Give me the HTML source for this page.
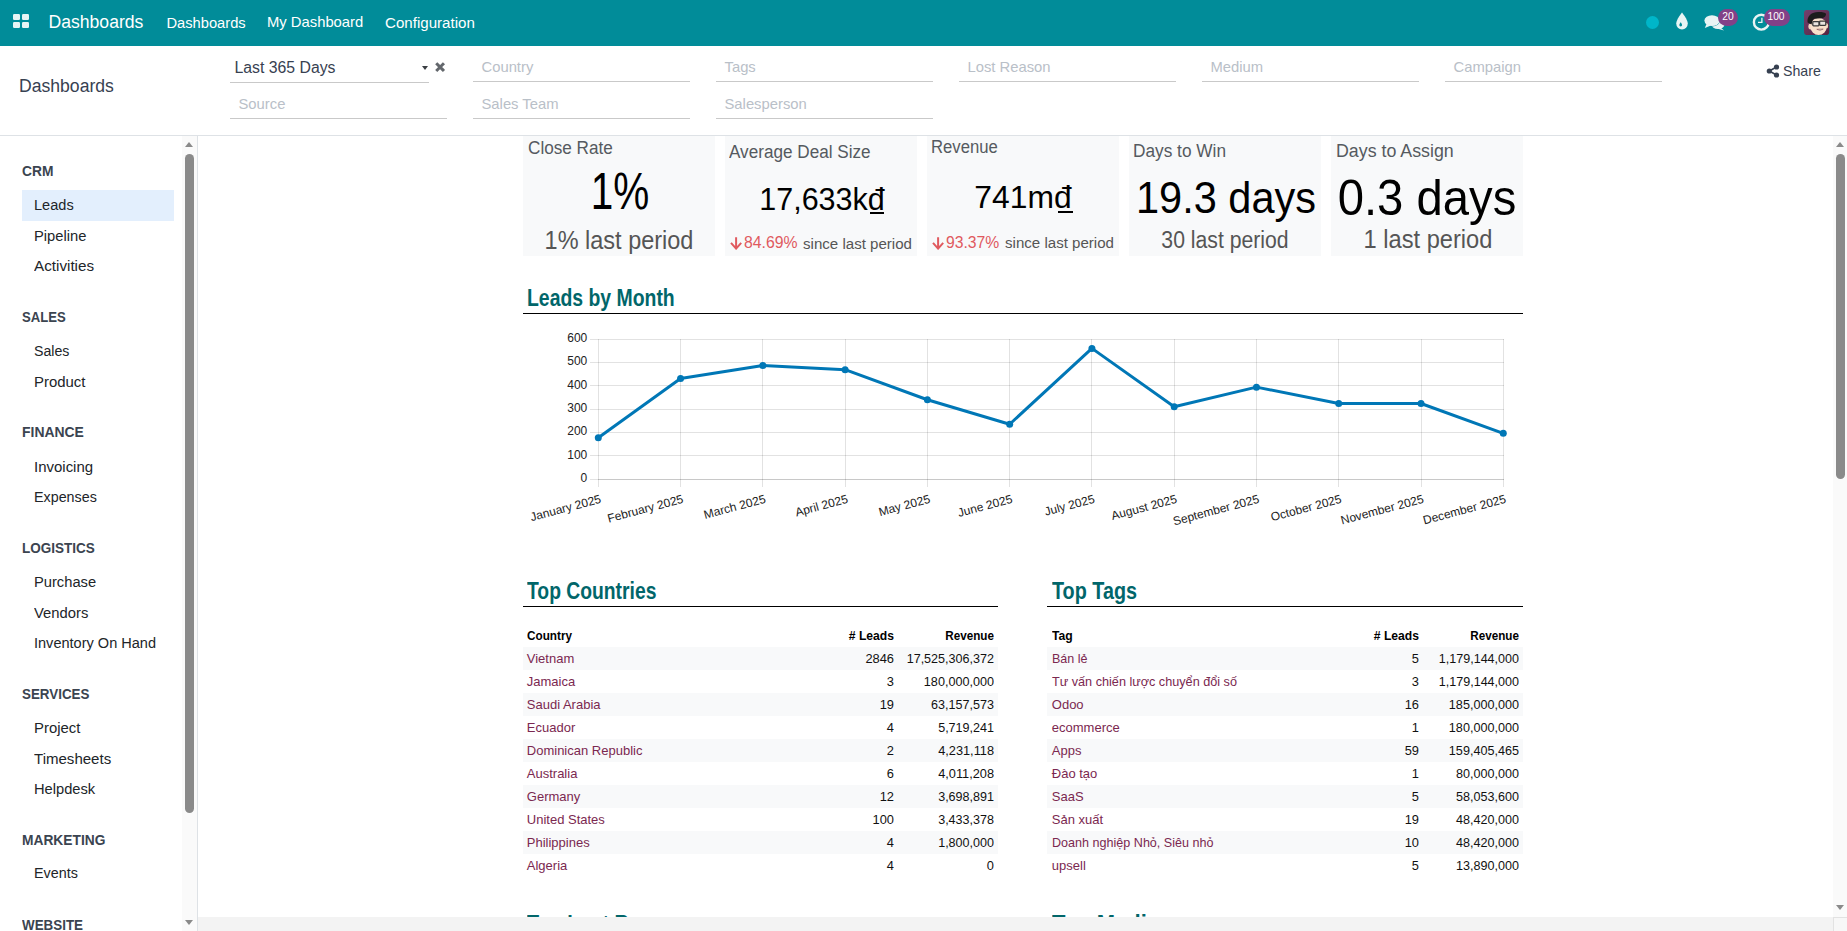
<!DOCTYPE html><html><head><meta charset="utf-8"><style>
html,body{margin:0;padding:0;}
body{width:1847px;height:931px;overflow:hidden;position:relative;background:#fff;font-family:"Liberation Sans",sans-serif;}
.t{position:absolute;white-space:nowrap;line-height:1;}
.b{position:absolute;}
</style></head><body>
<div class="b" style="left:523px;top:136px;width:192px;height:120px;background:#f8f9fa;"></div>
<div class="b" style="left:725px;top:136px;width:192px;height:120px;background:#f8f9fa;"></div>
<div class="b" style="left:927px;top:136px;width:192px;height:120px;background:#f8f9fa;"></div>
<div class="b" style="left:1129px;top:136px;width:192px;height:120px;background:#f8f9fa;"></div>
<div class="b" style="left:1331px;top:136px;width:192px;height:120px;background:#f8f9fa;"></div>
<div class="t" style="left:527.60px;top:140.00px;font-size:17.6px;font-weight:400;color:#555a60;transform:scaleX(0.9742);transform-origin:left top;">Close Rate</div>
<div class="t" style="left:119.90px;width:1000px;text-align:center;top:166.13px;font-size:51px;font-weight:400;color:#000;transform:scaleX(0.7936);transform-origin:center top;">1%</div>
<div class="t" style="left:119.40px;width:1000px;text-align:center;top:227.51px;font-size:25.5px;font-weight:400;color:#555555;transform:scaleX(0.9208);transform-origin:center top;">1% last period</div>
<div class="t" style="left:729.00px;top:144.20px;font-size:17.6px;font-weight:400;color:#555a60;transform:scaleX(0.9738);transform-origin:left top;">Average Deal Size</div>
<div class="t" style="left:322.00px;width:1000px;text-align:center;top:183.98px;font-size:30.5px;font-weight:400;color:#000;transform:scaleX(1.0000);transform-origin:center top;">17,633k&#273;</div>
<div class="b" style="left:870.3px;top:212px;width:14px;height:2px;background:#000;"></div>
<svg class="b" style="left:729.7px;top:237.3px" width="13" height="13" viewBox="0 0 13 13"><path d="M6.1 0.3 V11.2 M1 5.9 L6.1 11.6 L11.2 5.9" fill="none" stroke="#e05a5f" stroke-width="2"/></svg>
<div class="t" style="left:744.00px;top:235.26px;font-size:16px;font-weight:400;color:#e05a5f;transform:scaleX(0.9859);transform-origin:left top;">84.69%</div>
<div class="t" style="left:802.60px;top:235.85px;font-size:15.3px;font-weight:400;color:#555555;transform:scaleX(0.9860);transform-origin:left top;">since last period</div>
<div class="t" style="left:931.40px;top:138.80px;font-size:17.6px;font-weight:400;color:#555a60;transform:scaleX(0.9484);transform-origin:left top;">Revenue</div>
<div class="t" style="left:523.30px;width:1000px;text-align:center;top:181.41px;font-size:32px;font-weight:400;color:#000;transform:scaleX(0.9944);transform-origin:center top;">741m&#273;</div>
<div class="b" style="left:1058.4px;top:211px;width:14.5px;height:2px;background:#000;"></div>
<svg class="b" style="left:931.7px;top:236.8px" width="13" height="13" viewBox="0 0 13 13"><path d="M6.1 0.3 V11.2 M1 5.9 L6.1 11.6 L11.2 5.9" fill="none" stroke="#e05a5f" stroke-width="2"/></svg>
<div class="t" style="left:945.50px;top:234.66px;font-size:16px;font-weight:400;color:#e05a5f;transform:scaleX(0.9822);transform-origin:left top;">93.37%</div>
<div class="t" style="left:1004.50px;top:235.25px;font-size:15.3px;font-weight:400;color:#555555;transform:scaleX(0.9860);transform-origin:left top;">since last period</div>
<div class="t" style="left:1133.30px;top:142.60px;font-size:17.6px;font-weight:400;color:#555a60;transform:scaleX(0.9806);transform-origin:left top;">Days to Win</div>
<div class="t" style="left:725.60px;width:1000px;text-align:center;top:176.35px;font-size:44px;font-weight:400;color:#000;transform:scaleX(0.9433);transform-origin:center top;">19.3 days</div>
<div class="t" style="left:724.80px;width:1000px;text-align:center;top:228.61px;font-size:23.5px;font-weight:400;color:#555555;transform:scaleX(0.9022);transform-origin:center top;">30 last period</div>
<div class="t" style="left:1335.50px;top:142.60px;font-size:17.6px;font-weight:400;color:#555a60;transform:scaleX(1.0114);transform-origin:left top;">Days to Assign</div>
<div class="t" style="left:927.00px;width:1000px;text-align:center;top:174.31px;font-size:49.6px;font-weight:400;color:#000;transform:scaleX(0.9521);transform-origin:center top;">0.3 days</div>
<div class="t" style="left:927.70px;width:1000px;text-align:center;top:226.07px;font-size:26.5px;font-weight:400;color:#555555;transform:scaleX(0.8921);transform-origin:center top;">1 last period</div>
<div class="t" style="left:527.40px;top:286.15px;font-size:23.8px;font-weight:700;color:#01666a;transform:scaleX(0.8154);transform-origin:left top;">Leads by Month</div>
<div class="b" style="left:523px;top:313px;width:1000px;height:1px;background:#000;"></div>
<div class="t" style="left:526.80px;top:579.25px;font-size:23.8px;font-weight:700;color:#01666a;transform:scaleX(0.8112);transform-origin:left top;">Top Countries</div>
<div class="b" style="left:523px;top:606px;width:474.5px;height:1px;background:#000;"></div>
<div class="t" style="left:1052.10px;top:579.25px;font-size:23.8px;font-weight:700;color:#01666a;transform:scaleX(0.8314);transform-origin:left top;">Top Tags</div>
<div class="b" style="left:1047px;top:606px;width:476px;height:1px;background:#000;"></div>
<div class="t" style="left:526.80px;top:911.85px;font-size:23.8px;font-weight:700;color:#01666a;transform:scaleX(0.8313);transform-origin:left top;">Top Lost Reasons</div>
<div class="t" style="left:1052.10px;top:911.85px;font-size:23.8px;font-weight:700;color:#01666a;transform:scaleX(0.9235);transform-origin:left top;">Top Mediums</div>
<svg class="b" style="left:0;top:0" width="1847" height="931" viewBox="0 0 1847 931"><line x1="590" y1="479.5" x2="1504" y2="479.5" stroke="rgba(0,0,0,0.115)" stroke-width="1"/><line x1="590" y1="455.5" x2="1504" y2="455.5" stroke="rgba(0,0,0,0.115)" stroke-width="1"/><line x1="590" y1="432.5" x2="1504" y2="432.5" stroke="rgba(0,0,0,0.115)" stroke-width="1"/><line x1="590" y1="409.5" x2="1504" y2="409.5" stroke="rgba(0,0,0,0.115)" stroke-width="1"/><line x1="590" y1="385.5" x2="1504" y2="385.5" stroke="rgba(0,0,0,0.115)" stroke-width="1"/><line x1="590" y1="362.5" x2="1504" y2="362.5" stroke="rgba(0,0,0,0.115)" stroke-width="1"/><line x1="590" y1="339.5" x2="1504" y2="339.5" stroke="rgba(0,0,0,0.115)" stroke-width="1"/><line x1="598" y1="479.5" x2="1504" y2="479.5" stroke="rgba(0,0,0,0.115)" stroke-width="1"/><line x1="598.5" y1="339" x2="598.5" y2="487" stroke="rgba(0,0,0,0.115)" stroke-width="1"/><line x1="680.5" y1="339" x2="680.5" y2="487" stroke="rgba(0,0,0,0.115)" stroke-width="1"/><line x1="762.5" y1="339" x2="762.5" y2="487" stroke="rgba(0,0,0,0.115)" stroke-width="1"/><line x1="845.5" y1="339" x2="845.5" y2="487" stroke="rgba(0,0,0,0.115)" stroke-width="1"/><line x1="927.5" y1="339" x2="927.5" y2="487" stroke="rgba(0,0,0,0.115)" stroke-width="1"/><line x1="1009.5" y1="339" x2="1009.5" y2="487" stroke="rgba(0,0,0,0.115)" stroke-width="1"/><line x1="1091.5" y1="339" x2="1091.5" y2="487" stroke="rgba(0,0,0,0.115)" stroke-width="1"/><line x1="1174.5" y1="339" x2="1174.5" y2="487" stroke="rgba(0,0,0,0.115)" stroke-width="1"/><line x1="1256.5" y1="339" x2="1256.5" y2="487" stroke="rgba(0,0,0,0.115)" stroke-width="1"/><line x1="1338.5" y1="339" x2="1338.5" y2="487" stroke="rgba(0,0,0,0.115)" stroke-width="1"/><line x1="1421.5" y1="339" x2="1421.5" y2="487" stroke="rgba(0,0,0,0.115)" stroke-width="1"/><line x1="1503.5" y1="339" x2="1503.5" y2="487" stroke="rgba(0,0,0,0.115)" stroke-width="1"/><polyline fill="none" stroke="#0077b6" stroke-width="3" stroke-linejoin="round" points="598.30,437.77 680.57,378.50 762.84,365.43 845.11,369.63 927.38,399.73 1009.65,424.23 1091.92,348.40 1174.19,406.73 1256.46,387.13 1338.73,403.47 1421.00,403.47 1503.27,433.33"/><circle cx="598.30" cy="437.77" r="3.5" fill="#0077b6"/><circle cx="680.57" cy="378.50" r="3.5" fill="#0077b6"/><circle cx="762.84" cy="365.43" r="3.5" fill="#0077b6"/><circle cx="845.11" cy="369.63" r="3.5" fill="#0077b6"/><circle cx="927.38" cy="399.73" r="3.5" fill="#0077b6"/><circle cx="1009.65" cy="424.23" r="3.5" fill="#0077b6"/><circle cx="1091.92" cy="348.40" r="3.5" fill="#0077b6"/><circle cx="1174.19" cy="406.73" r="3.5" fill="#0077b6"/><circle cx="1256.46" cy="387.13" r="3.5" fill="#0077b6"/><circle cx="1338.73" cy="403.47" r="3.5" fill="#0077b6"/><circle cx="1421.00" cy="403.47" r="3.5" fill="#0077b6"/><circle cx="1503.27" cy="433.33" r="3.5" fill="#0077b6"/><text x="587.3" y="482.10" text-anchor="end" font-family="Liberation Sans" font-size="12" fill="#222">0</text><text x="587.3" y="458.77" text-anchor="end" font-family="Liberation Sans" font-size="12" fill="#222">100</text><text x="587.3" y="435.43" text-anchor="end" font-family="Liberation Sans" font-size="12" fill="#222">200</text><text x="587.3" y="412.10" text-anchor="end" font-family="Liberation Sans" font-size="12" fill="#222">300</text><text x="587.3" y="388.77" text-anchor="end" font-family="Liberation Sans" font-size="12" fill="#222">400</text><text x="587.3" y="365.43" text-anchor="end" font-family="Liberation Sans" font-size="12" fill="#222">500</text><text x="587.3" y="342.10" text-anchor="end" font-family="Liberation Sans" font-size="12" fill="#222">600</text><text x="601.80" y="502.5" text-anchor="end" font-family="Liberation Sans" font-size="12" fill="#222" transform="rotate(-15 601.80 502.5)">January 2025</text><text x="684.07" y="502.5" text-anchor="end" font-family="Liberation Sans" font-size="12" fill="#222" transform="rotate(-15 684.07 502.5)">February 2025</text><text x="766.34" y="502.5" text-anchor="end" font-family="Liberation Sans" font-size="12" fill="#222" transform="rotate(-15 766.34 502.5)">March 2025</text><text x="848.61" y="502.5" text-anchor="end" font-family="Liberation Sans" font-size="12" fill="#222" transform="rotate(-15 848.61 502.5)">April 2025</text><text x="930.88" y="502.5" text-anchor="end" font-family="Liberation Sans" font-size="12" fill="#222" transform="rotate(-15 930.88 502.5)">May 2025</text><text x="1013.15" y="502.5" text-anchor="end" font-family="Liberation Sans" font-size="12" fill="#222" transform="rotate(-15 1013.15 502.5)">June 2025</text><text x="1095.42" y="502.5" text-anchor="end" font-family="Liberation Sans" font-size="12" fill="#222" transform="rotate(-15 1095.42 502.5)">July 2025</text><text x="1177.69" y="502.5" text-anchor="end" font-family="Liberation Sans" font-size="12" fill="#222" transform="rotate(-15 1177.69 502.5)">August 2025</text><text x="1259.96" y="502.5" text-anchor="end" font-family="Liberation Sans" font-size="12" fill="#222" transform="rotate(-15 1259.96 502.5)">September 2025</text><text x="1342.23" y="502.5" text-anchor="end" font-family="Liberation Sans" font-size="12" fill="#222" transform="rotate(-15 1342.23 502.5)">October 2025</text><text x="1424.50" y="502.5" text-anchor="end" font-family="Liberation Sans" font-size="12" fill="#222" transform="rotate(-15 1424.50 502.5)">November 2025</text><text x="1506.77" y="502.5" text-anchor="end" font-family="Liberation Sans" font-size="12" fill="#222" transform="rotate(-15 1506.77 502.5)">December 2025</text></svg>
<div class="t" style="left:526.80px;top:628.80px;font-size:13px;font-weight:700;color:#000;transform:scaleX(0.9028);transform-origin:left top;">Country</div>
<div class="t" style="left:-106.50px;width:1000px;text-align:right;top:628.80px;font-size:13px;font-weight:700;color:#000;transform:scaleX(0.9335);transform-origin:right top;"># Leads</div>
<div class="t" style="left:-6.00px;width:1000px;text-align:right;top:628.80px;font-size:13px;font-weight:700;color:#000;transform:scaleX(0.8985);transform-origin:right top;">Revenue</div>
<div class="b" style="left:523px;top:646.6px;width:474.5px;height:23px;background:#f8f9fa;"></div>
<div class="t" style="left:526.80px;top:652.00px;font-size:13px;font-weight:400;color:#7b2850;">Vietnam</div>
<div class="t" style="left:-106.50px;width:1000px;text-align:right;top:652.00px;font-size:13px;font-weight:400;color:#111;transform:scaleX(0.9889);transform-origin:right top;">2846</div>
<div class="t" style="left:-6.00px;width:1000px;text-align:right;top:652.00px;font-size:13px;font-weight:400;color:#111;transform:scaleX(0.9665);transform-origin:right top;">17,525,306,372</div>
<div class="t" style="left:526.80px;top:675.00px;font-size:13px;font-weight:400;color:#7b2850;">Jamaica</div>
<div class="t" style="left:-106.50px;width:1000px;text-align:right;top:675.00px;font-size:13px;font-weight:400;color:#111;transform:scaleX(0.9883);transform-origin:right top;">3</div>
<div class="t" style="left:-6.00px;width:1000px;text-align:right;top:675.00px;font-size:13px;font-weight:400;color:#111;transform:scaleX(0.9703);transform-origin:right top;">180,000,000</div>
<div class="b" style="left:523px;top:692.6px;width:474.5px;height:23px;background:#f8f9fa;"></div>
<div class="t" style="left:526.80px;top:698.00px;font-size:13px;font-weight:400;color:#7b2850;">Saudi Arabia</div>
<div class="t" style="left:-106.50px;width:1000px;text-align:right;top:698.00px;font-size:13px;font-weight:400;color:#111;transform:scaleX(0.9883);transform-origin:right top;">19</div>
<div class="t" style="left:-6.00px;width:1000px;text-align:right;top:698.00px;font-size:13px;font-weight:400;color:#111;transform:scaleX(0.9681);transform-origin:right top;">63,157,573</div>
<div class="t" style="left:526.80px;top:721.00px;font-size:13px;font-weight:400;color:#7b2850;">Ecuador</div>
<div class="t" style="left:-106.50px;width:1000px;text-align:right;top:721.00px;font-size:13px;font-weight:400;color:#111;transform:scaleX(0.9883);transform-origin:right top;">4</div>
<div class="t" style="left:-6.00px;width:1000px;text-align:right;top:721.00px;font-size:13px;font-weight:400;color:#111;transform:scaleX(0.9655);transform-origin:right top;">5,719,241</div>
<div class="b" style="left:523px;top:738.6px;width:474.5px;height:23px;background:#f8f9fa;"></div>
<div class="t" style="left:526.80px;top:744.00px;font-size:13px;font-weight:400;color:#7b2850;">Dominican Republic</div>
<div class="t" style="left:-106.50px;width:1000px;text-align:right;top:744.00px;font-size:13px;font-weight:400;color:#111;transform:scaleX(0.9883);transform-origin:right top;">2</div>
<div class="t" style="left:-6.00px;width:1000px;text-align:right;top:744.00px;font-size:13px;font-weight:400;color:#111;transform:scaleX(0.9820);transform-origin:right top;">4,231,118</div>
<div class="t" style="left:526.80px;top:767.00px;font-size:13px;font-weight:400;color:#7b2850;">Australia</div>
<div class="t" style="left:-106.50px;width:1000px;text-align:right;top:767.00px;font-size:13px;font-weight:400;color:#111;transform:scaleX(0.9883);transform-origin:right top;">6</div>
<div class="t" style="left:-6.00px;width:1000px;text-align:right;top:767.00px;font-size:13px;font-weight:400;color:#111;transform:scaleX(0.9820);transform-origin:right top;">4,011,208</div>
<div class="b" style="left:523px;top:784.6px;width:474.5px;height:23px;background:#f8f9fa;"></div>
<div class="t" style="left:526.80px;top:790.00px;font-size:13px;font-weight:400;color:#7b2850;">Germany</div>
<div class="t" style="left:-106.50px;width:1000px;text-align:right;top:790.00px;font-size:13px;font-weight:400;color:#111;transform:scaleX(0.9883);transform-origin:right top;">12</div>
<div class="t" style="left:-6.00px;width:1000px;text-align:right;top:790.00px;font-size:13px;font-weight:400;color:#111;transform:scaleX(0.9655);transform-origin:right top;">3,698,891</div>
<div class="t" style="left:526.80px;top:813.00px;font-size:13px;font-weight:400;color:#7b2850;">United States</div>
<div class="t" style="left:-106.50px;width:1000px;text-align:right;top:813.00px;font-size:13px;font-weight:400;color:#111;transform:scaleX(0.9883);transform-origin:right top;">100</div>
<div class="t" style="left:-6.00px;width:1000px;text-align:right;top:813.00px;font-size:13px;font-weight:400;color:#111;transform:scaleX(0.9655);transform-origin:right top;">3,433,378</div>
<div class="b" style="left:523px;top:830.6px;width:474.5px;height:23px;background:#f8f9fa;"></div>
<div class="t" style="left:526.80px;top:836.00px;font-size:13px;font-weight:400;color:#7b2850;">Philippines</div>
<div class="t" style="left:-106.50px;width:1000px;text-align:right;top:836.00px;font-size:13px;font-weight:400;color:#111;transform:scaleX(0.9883);transform-origin:right top;">4</div>
<div class="t" style="left:-6.00px;width:1000px;text-align:right;top:836.00px;font-size:13px;font-weight:400;color:#111;transform:scaleX(0.9655);transform-origin:right top;">1,800,000</div>
<div class="t" style="left:526.80px;top:859.00px;font-size:13px;font-weight:400;color:#7b2850;">Algeria</div>
<div class="t" style="left:-106.50px;width:1000px;text-align:right;top:859.00px;font-size:13px;font-weight:400;color:#111;transform:scaleX(0.9883);transform-origin:right top;">4</div>
<div class="t" style="left:-6.00px;width:1000px;text-align:right;top:859.00px;font-size:13px;font-weight:400;color:#111;transform:scaleX(0.9883);transform-origin:right top;">0</div>
<div class="t" style="left:1051.80px;top:628.80px;font-size:13px;font-weight:700;color:#000;transform:scaleX(0.9343);transform-origin:left top;">Tag</div>
<div class="t" style="left:418.50px;width:1000px;text-align:right;top:628.80px;font-size:13px;font-weight:700;color:#000;transform:scaleX(0.9335);transform-origin:right top;"># Leads</div>
<div class="t" style="left:519.00px;width:1000px;text-align:right;top:628.80px;font-size:13px;font-weight:700;color:#000;transform:scaleX(0.8985);transform-origin:right top;">Revenue</div>
<div class="b" style="left:1047px;top:646.6px;width:476px;height:23px;background:#f8f9fa;"></div>
<div class="t" style="left:1051.80px;top:652.00px;font-size:13px;font-weight:400;color:#7b2850;transform:scaleX(0.9627);transform-origin:left top;">B&aacute;n l&#7867;</div>
<div class="t" style="left:418.50px;width:1000px;text-align:right;top:652.00px;font-size:13px;font-weight:400;color:#111;transform:scaleX(0.9883);transform-origin:right top;">5</div>
<div class="t" style="left:519.00px;width:1000px;text-align:right;top:652.00px;font-size:13px;font-weight:400;color:#111;transform:scaleX(0.9646);transform-origin:right top;">1,179,144,000</div>
<div class="t" style="left:1051.80px;top:675.00px;font-size:13px;font-weight:400;color:#7b2850;transform:scaleX(0.9738);transform-origin:left top;">T&#432; v&#7845;n chi&#7871;n l&#432;&#7907;c chuy&#7875;n &#273;&#7893;i s&#7889;</div>
<div class="t" style="left:418.50px;width:1000px;text-align:right;top:675.00px;font-size:13px;font-weight:400;color:#111;transform:scaleX(0.9883);transform-origin:right top;">3</div>
<div class="t" style="left:519.00px;width:1000px;text-align:right;top:675.00px;font-size:13px;font-weight:400;color:#111;transform:scaleX(0.9646);transform-origin:right top;">1,179,144,000</div>
<div class="b" style="left:1047px;top:692.6px;width:476px;height:23px;background:#f8f9fa;"></div>
<div class="t" style="left:1051.80px;top:698.00px;font-size:13px;font-weight:400;color:#7b2850;">Odoo</div>
<div class="t" style="left:418.50px;width:1000px;text-align:right;top:698.00px;font-size:13px;font-weight:400;color:#111;transform:scaleX(0.9883);transform-origin:right top;">16</div>
<div class="t" style="left:519.00px;width:1000px;text-align:right;top:698.00px;font-size:13px;font-weight:400;color:#111;transform:scaleX(0.9703);transform-origin:right top;">185,000,000</div>
<div class="t" style="left:1051.80px;top:721.00px;font-size:13px;font-weight:400;color:#7b2850;">ecommerce</div>
<div class="t" style="left:418.50px;width:1000px;text-align:right;top:721.00px;font-size:13px;font-weight:400;color:#111;transform:scaleX(0.9883);transform-origin:right top;">1</div>
<div class="t" style="left:519.00px;width:1000px;text-align:right;top:721.00px;font-size:13px;font-weight:400;color:#111;transform:scaleX(0.9703);transform-origin:right top;">180,000,000</div>
<div class="b" style="left:1047px;top:738.6px;width:476px;height:23px;background:#f8f9fa;"></div>
<div class="t" style="left:1051.80px;top:744.00px;font-size:13px;font-weight:400;color:#7b2850;">Apps</div>
<div class="t" style="left:418.50px;width:1000px;text-align:right;top:744.00px;font-size:13px;font-weight:400;color:#111;transform:scaleX(0.9883);transform-origin:right top;">59</div>
<div class="t" style="left:519.00px;width:1000px;text-align:right;top:744.00px;font-size:13px;font-weight:400;color:#111;transform:scaleX(0.9703);transform-origin:right top;">159,405,465</div>
<div class="t" style="left:1051.80px;top:767.00px;font-size:13px;font-weight:400;color:#7b2850;">&#272;&agrave;o t&#7841;o</div>
<div class="t" style="left:418.50px;width:1000px;text-align:right;top:767.00px;font-size:13px;font-weight:400;color:#111;transform:scaleX(0.9883);transform-origin:right top;">1</div>
<div class="t" style="left:519.00px;width:1000px;text-align:right;top:767.00px;font-size:13px;font-weight:400;color:#111;transform:scaleX(0.9681);transform-origin:right top;">80,000,000</div>
<div class="b" style="left:1047px;top:784.6px;width:476px;height:23px;background:#f8f9fa;"></div>
<div class="t" style="left:1051.80px;top:790.00px;font-size:13px;font-weight:400;color:#7b2850;">SaaS</div>
<div class="t" style="left:418.50px;width:1000px;text-align:right;top:790.00px;font-size:13px;font-weight:400;color:#111;transform:scaleX(0.9883);transform-origin:right top;">5</div>
<div class="t" style="left:519.00px;width:1000px;text-align:right;top:790.00px;font-size:13px;font-weight:400;color:#111;transform:scaleX(0.9681);transform-origin:right top;">58,053,600</div>
<div class="t" style="left:1051.80px;top:813.00px;font-size:13px;font-weight:400;color:#7b2850;">S&#7843;n xu&#7845;t</div>
<div class="t" style="left:418.50px;width:1000px;text-align:right;top:813.00px;font-size:13px;font-weight:400;color:#111;transform:scaleX(0.9883);transform-origin:right top;">19</div>
<div class="t" style="left:519.00px;width:1000px;text-align:right;top:813.00px;font-size:13px;font-weight:400;color:#111;transform:scaleX(0.9681);transform-origin:right top;">48,420,000</div>
<div class="b" style="left:1047px;top:830.6px;width:476px;height:23px;background:#f8f9fa;"></div>
<div class="t" style="left:1051.80px;top:836.00px;font-size:13px;font-weight:400;color:#7b2850;transform:scaleX(0.9672);transform-origin:left top;">Doanh nghi&#7879;p Nh&#7887;, Si&ecirc;u nh&#7887;</div>
<div class="t" style="left:418.50px;width:1000px;text-align:right;top:836.00px;font-size:13px;font-weight:400;color:#111;transform:scaleX(0.9883);transform-origin:right top;">10</div>
<div class="t" style="left:519.00px;width:1000px;text-align:right;top:836.00px;font-size:13px;font-weight:400;color:#111;transform:scaleX(0.9681);transform-origin:right top;">48,420,000</div>
<div class="t" style="left:1051.80px;top:859.00px;font-size:13px;font-weight:400;color:#7b2850;">upsell</div>
<div class="t" style="left:418.50px;width:1000px;text-align:right;top:859.00px;font-size:13px;font-weight:400;color:#111;transform:scaleX(0.9883);transform-origin:right top;">5</div>
<div class="t" style="left:519.00px;width:1000px;text-align:right;top:859.00px;font-size:13px;font-weight:400;color:#111;transform:scaleX(0.9681);transform-origin:right top;">13,890,000</div>
<div class="b" style="left:1833px;top:136px;width:14px;height:781px;background:#fafafa;"></div>
<div class="b" style="left:1836px;top:141.8px;width:0px;height:0px;background:transparent;border-left:4.5px solid transparent;border-right:4.5px solid transparent;border-bottom:5.2px solid #8a8a8a"></div>
<div class="b" style="left:1836px;top:154px;width:9px;height:325px;background:#8a8a8a;border-radius:4.5px"></div>
<div class="b" style="left:1835.8px;top:905px;width:0px;height:0px;background:transparent;border-left:4.7px solid transparent;border-right:4.7px solid transparent;border-top:5.2px solid #8a8a8a"></div>
<div class="b" style="left:198px;top:917px;width:1635px;height:14px;background:#f3f3f3;"></div>
<div class="b" style="left:1832.5px;top:916.5px;width:14px;height:14px;background:#f7f7f7;border-left:1px solid #e2e2e2;border-top:1px solid #e2e2e2"></div>
<div class="b" style="left:0px;top:0px;width:1847px;height:46px;background:#018c99;"></div>
<div class="b" style="left:13px;top:14px;width:7px;height:6px;background:#e8f4f4;border-radius:1.2px"></div>
<div class="b" style="left:21.5px;top:14px;width:7px;height:6px;background:#e8f4f4;border-radius:1.2px"></div>
<div class="b" style="left:13px;top:22px;width:7px;height:6px;background:#e8f4f4;border-radius:1.2px"></div>
<div class="b" style="left:21.5px;top:22px;width:7px;height:6px;background:#e8f4f4;border-radius:1.2px"></div>
<div class="t" style="left:48.50px;top:14.10px;font-size:17.6px;font-weight:400;color:#ffffff;">Dashboards</div>
<div class="t" style="left:166.50px;top:15.56px;font-size:14.7px;font-weight:400;color:#ffffff;">Dashboards</div>
<div class="t" style="left:267.00px;top:15.47px;font-size:14.8px;font-weight:400;color:#ffffff;">My Dashboard</div>
<div class="t" style="left:385.00px;top:15.22px;font-size:15.1px;font-weight:400;color:#ffffff;">Configuration</div>
<div class="b" style="left:1645.5px;top:15.8px;width:13px;height:13px;background:#00b6c9;border-radius:50%"></div>
<svg class="b" style="left:1674px;top:11px" width="16" height="20" viewBox="0 0 16 20"><path d="M8 1.5 C8 1.5 2.2 8.6 2.2 12.6 A5.8 5.8 0 0 0 13.8 12.6 C13.8 8.6 8 1.5 8 1.5Z" fill="#e8f4f4"/><path d="M6.7 11.3 C6.7 11.3 5.3 13.1 5.3 14 A1.4 1.4 0 0 0 8.1 14 C8.1 13.1 6.7 11.3 6.7 11.3Z" fill="#018c99"/></svg>
<svg class="b" style="left:1703px;top:13px" width="22" height="19" viewBox="0 0 22 19"><ellipse cx="15" cy="11.5" rx="6.5" ry="4.6" fill="#e8f4f4"/><path d="M17.5 14.5 L21 17.6 L14 15.6Z" fill="#e8f4f4"/><ellipse cx="9" cy="7.6" rx="8" ry="5.8" fill="#018c99"/><ellipse cx="9" cy="7.6" rx="7.6" ry="5.4" fill="#e8f4f4"/><path d="M3.5 11 L1.8 15 L8 12.6Z" fill="#e8f4f4"/></svg>
<svg class="b" style="left:1751px;top:12px" width="20" height="20" viewBox="0 0 20 20"><circle cx="10.3" cy="10.2" r="7.4" fill="none" stroke="#e8f4f4" stroke-width="2.4"/><path d="M10.9 5.8 V10.4 H7" fill="none" stroke="#e8f4f4" stroke-width="1.3"/></svg>
<div class="b" style="left:1718px;top:9.3px;width:20px;height:17px;background:#834188;border-radius:8.5px"></div>
<div class="t" style="left:1228.00px;width:1000px;text-align:center;top:11.27px;font-size:11.5px;font-weight:400;color:#ffffff;transform:scaleX(0.8908);transform-origin:center top;">20</div>
<div class="b" style="left:1763.5px;top:9.3px;width:26px;height:17px;background:#834188;border-radius:8.5px"></div>
<div class="t" style="left:1276.40px;width:1000px;text-align:center;top:11.27px;font-size:11.5px;font-weight:400;color:#ffffff;transform:scaleX(0.8860);transform-origin:center top;">100</div>
<svg class="b" style="left:1804.4px;top:10.3px" width="25.3" height="25.1" viewBox="0 0 25.3 25.1"><defs><linearGradient id="avg" x1="0" y1="0" x2="1" y2="1"><stop offset="0" stop-color="#74406e"/><stop offset="1" stop-color="#55243f"/></linearGradient></defs><rect x="0" y="0" width="25.3" height="25.1" rx="3" fill="url(#avg)"/><ellipse cx="6.6" cy="16.5" rx="2.2" ry="3" fill="#f3d6bf"/><ellipse cx="22.3" cy="15.8" rx="1.9" ry="2.8" fill="#f3d6bf"/><ellipse cx="14.6" cy="16.3" rx="8.2" ry="8.6" fill="#f8e0cb"/><path d="M3.6 12.5 C2.6 5 9 1.2 16 2 C19.5 2.3 22.5 2.6 22 4.8 C21.5 7 19.5 8.2 17 8.3 L10 8.8 C8.6 10 8 12.5 7.6 14.5 Z" fill="#1c1c1c"/><rect x="8.8" y="11.6" width="6.2" height="4.2" rx="0.8" fill="#e9e4df" stroke="#3a3a3a" stroke-width="1.3"/><rect x="15.6" y="11.2" width="6.2" height="4.2" rx="0.8" fill="#e9e4df" stroke="#3a3a3a" stroke-width="1.3"/><path d="M12.8 19.3 Q16 21.4 19.2 19.1 Z" fill="#fff" stroke="#8a5a5a" stroke-width="0.7"/></svg>
<div class="b" style="left:0px;top:135px;width:1847px;height:1px;background:#dee2e6;"></div>
<div class="t" style="left:19.00px;top:77.80px;font-size:17.6px;font-weight:400;color:#374151;">Dashboards</div>
<div class="t" style="left:234.50px;top:59.73px;font-size:15.8px;font-weight:400;color:#374151;">Last 365 Days</div>
<div class="b" style="left:230px;top:82px;width:199px;height:1px;background:#c9c9c9;"></div>
<div class="b" style="left:421.8px;top:66px;width:0px;height:0px;background:transparent;border-left:3.7px solid transparent;border-right:3.7px solid transparent;border-top:4.3px solid #3b3f44"></div>
<svg class="b" style="left:434.2px;top:61px" width="12" height="12" viewBox="0 0 12 12"><path d="M3.3 3.3 L8.9 8.9 M8.9 3.3 L3.3 8.9" stroke="#63676c" stroke-width="3" stroke-linecap="square"/></svg>
<div class="b" style="left:473px;top:81px;width:217px;height:1px;background:#c9c9c9;"></div>
<div class="t" style="left:481.50px;top:60.27px;font-size:14.8px;font-weight:400;color:#b9c0c8;">Country</div>
<div class="b" style="left:716px;top:81px;width:217px;height:1px;background:#c9c9c9;"></div>
<div class="t" style="left:724.50px;top:60.27px;font-size:14.8px;font-weight:400;color:#b9c0c8;">Tags</div>
<div class="b" style="left:959px;top:81px;width:217px;height:1px;background:#c9c9c9;"></div>
<div class="t" style="left:967.50px;top:60.27px;font-size:14.8px;font-weight:400;color:#b9c0c8;">Lost Reason</div>
<div class="b" style="left:1202px;top:81px;width:217px;height:1px;background:#c9c9c9;"></div>
<div class="t" style="left:1210.50px;top:60.27px;font-size:14.8px;font-weight:400;color:#b9c0c8;">Medium</div>
<div class="b" style="left:1445px;top:81px;width:217px;height:1px;background:#c9c9c9;"></div>
<div class="t" style="left:1453.50px;top:60.27px;font-size:14.8px;font-weight:400;color:#b9c0c8;">Campaign</div>
<div class="b" style="left:230px;top:118px;width:217px;height:1px;background:#c9c9c9;"></div>
<div class="t" style="left:238.50px;top:97.27px;font-size:14.8px;font-weight:400;color:#b9c0c8;">Source</div>
<div class="b" style="left:473px;top:118px;width:217px;height:1px;background:#c9c9c9;"></div>
<div class="t" style="left:481.50px;top:97.27px;font-size:14.8px;font-weight:400;color:#b9c0c8;">Sales Team</div>
<div class="b" style="left:716px;top:118px;width:217px;height:1px;background:#c9c9c9;"></div>
<div class="t" style="left:724.50px;top:97.27px;font-size:14.8px;font-weight:400;color:#b9c0c8;">Salesperson</div>
<svg class="b" style="left:1765.5px;top:63.5px" width="14" height="14" viewBox="0 0 14 14"><circle cx="3.3" cy="7" r="2.6" fill="#374151"/><circle cx="10.5" cy="3" r="2.6" fill="#374151"/><circle cx="10.5" cy="11" r="2.6" fill="#374151"/><path d="M3.3 7 L10.5 3 M3.3 7 L10.5 11" stroke="#374151" stroke-width="1.6"/></svg>
<div class="t" style="left:1783.00px;top:63.78px;font-size:14.2px;font-weight:400;color:#374151;">Share</div>
<div class="b" style="left:182px;top:136px;width:15px;height:795px;background:#fafafa;"></div>
<div class="b" style="left:197px;top:136px;width:1px;height:795px;background:#dee2e6;"></div>
<div class="b" style="left:185px;top:141.5px;width:0px;height:0px;background:transparent;border-left:4.5px solid transparent;border-right:4.5px solid transparent;border-bottom:5.5px solid #8a8a8a"></div>
<div class="b" style="left:185px;top:154px;width:9px;height:659px;background:#8a8a8a;border-radius:4.5px"></div>
<div class="b" style="left:185px;top:919.5px;width:0px;height:0px;background:transparent;border-left:4.5px solid transparent;border-right:4.5px solid transparent;border-top:5.5px solid #8a8a8a"></div>
<div class="b" style="left:22px;top:190px;width:152px;height:31px;background:#e3effd;"></div>
<div class="t" style="left:22.10px;top:162.96px;font-size:15.4px;font-weight:700;color:#3b4450;transform:scaleX(0.8955);transform-origin:left top;">CRM</div>
<div class="t" style="left:34.40px;top:196.96px;font-size:15.4px;font-weight:400;color:#212529;transform:scaleX(0.9466);transform-origin:left top;">Leads</div>
<div class="t" style="left:34.40px;top:227.96px;font-size:15.4px;font-weight:400;color:#212529;transform:scaleX(0.9568);transform-origin:left top;">Pipeline</div>
<div class="t" style="left:34.40px;top:257.96px;font-size:15.4px;font-weight:400;color:#212529;transform:scaleX(0.9896);transform-origin:left top;">Activities</div>
<div class="t" style="left:22.10px;top:309.46px;font-size:15.4px;font-weight:700;color:#3b4450;transform:scaleX(0.8516);transform-origin:left top;">SALES</div>
<div class="t" style="left:34.40px;top:342.96px;font-size:15.4px;font-weight:400;color:#212529;transform:scaleX(0.9195);transform-origin:left top;">Sales</div>
<div class="t" style="left:34.40px;top:373.96px;font-size:15.4px;font-weight:400;color:#212529;transform:scaleX(0.9708);transform-origin:left top;">Product</div>
<div class="t" style="left:22.10px;top:424.06px;font-size:15.4px;font-weight:700;color:#3b4450;transform:scaleX(0.9049);transform-origin:left top;">FINANCE</div>
<div class="t" style="left:34.40px;top:458.76px;font-size:15.4px;font-weight:400;color:#212529;transform:scaleX(0.9728);transform-origin:left top;">Invoicing</div>
<div class="t" style="left:34.40px;top:489.36px;font-size:15.4px;font-weight:400;color:#212529;transform:scaleX(0.9291);transform-origin:left top;">Expenses</div>
<div class="t" style="left:22.10px;top:540.16px;font-size:15.4px;font-weight:700;color:#3b4450;transform:scaleX(0.8776);transform-origin:left top;">LOGISTICS</div>
<div class="t" style="left:34.40px;top:573.86px;font-size:15.4px;font-weight:400;color:#212529;transform:scaleX(0.9549);transform-origin:left top;">Purchase</div>
<div class="t" style="left:34.40px;top:604.86px;font-size:15.4px;font-weight:400;color:#212529;transform:scaleX(0.9613);transform-origin:left top;">Vendors</div>
<div class="t" style="left:34.40px;top:634.86px;font-size:15.4px;font-weight:400;color:#212529;transform:scaleX(0.9444);transform-origin:left top;">Inventory On Hand</div>
<div class="t" style="left:22.10px;top:685.96px;font-size:15.4px;font-weight:700;color:#3b4450;transform:scaleX(0.8690);transform-origin:left top;">SERVICES</div>
<div class="t" style="left:34.40px;top:719.86px;font-size:15.4px;font-weight:400;color:#212529;transform:scaleX(0.9665);transform-origin:left top;">Project</div>
<div class="t" style="left:34.40px;top:750.66px;font-size:15.4px;font-weight:400;color:#212529;transform:scaleX(0.9774);transform-origin:left top;">Timesheets</div>
<div class="t" style="left:34.40px;top:780.76px;font-size:15.4px;font-weight:400;color:#212529;transform:scaleX(0.9537);transform-origin:left top;">Helpdesk</div>
<div class="t" style="left:22.10px;top:831.66px;font-size:15.4px;font-weight:700;color:#3b4450;transform:scaleX(0.8948);transform-origin:left top;">MARKETING</div>
<div class="t" style="left:34.40px;top:865.46px;font-size:15.4px;font-weight:400;color:#212529;transform:scaleX(0.9307);transform-origin:left top;">Events</div>
<div class="t" style="left:22.10px;top:916.76px;font-size:15.4px;font-weight:700;color:#3b4450;transform:scaleX(0.8699);transform-origin:left top;">WEBSITE</div>
</body></html>
